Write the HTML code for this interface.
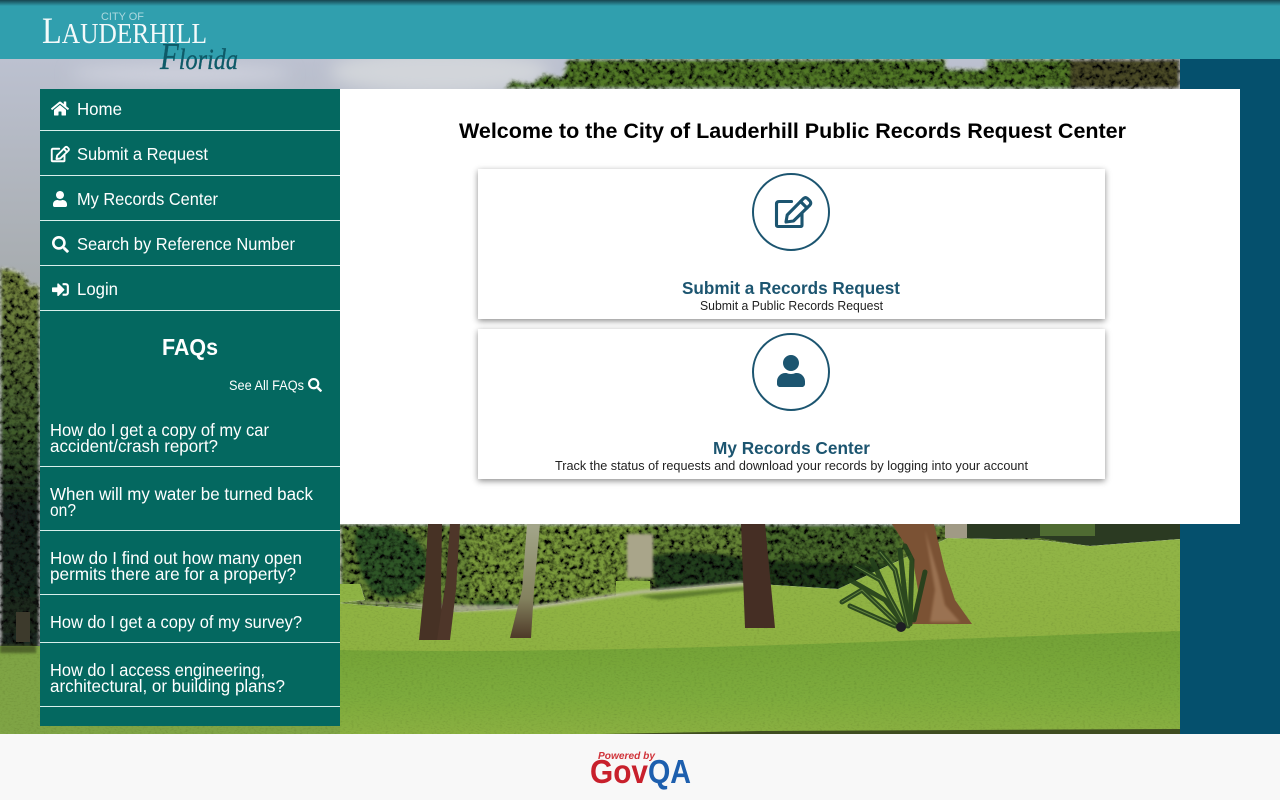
<!DOCTYPE html>
<html lang="en"><head><meta charset="utf-8"><title>City of Lauderhill Public Records Request Center</title>
<style>
html,body{margin:0;padding:0;width:1280px;height:800px;overflow:hidden;background:#fff;font-family:"Liberation Sans",sans-serif}
svg{position:absolute;left:0;top:0;display:block}
.b{position:absolute}
.card{left:478px;width:627px;height:150px;background:#fff;box-shadow:0 2px 6px rgba(0,0,0,.45)}
.ln{position:absolute;left:40px;width:300px;height:1px;background:#d8efec}
text{font-family:"Liberation Sans",sans-serif}
.m{fill:#fff;font-size:17.5px}
.f{fill:#fff;font-size:17.5px}
.ic{fill:#fff}
.dk{fill:#1c5570}
</style></head><body>
<svg width="1280" height="800" viewBox="0 0 1280 800">
<defs>
<linearGradient id="sky" gradientUnits="userSpaceOnUse" x1="0" y1="59" x2="0" y2="280"><stop offset="0" stop-color="#bcc1d0"/><stop offset="1" stop-color="#a7acaf"/></linearGradient>
<linearGradient id="lt" gradientUnits="userSpaceOnUse" x1="0" y1="270" x2="0" y2="640"><stop offset="0" stop-color="#7a8a40"/><stop offset=".45" stop-color="#3f5a2c"/><stop offset=".65" stop-color="#15241a"/><stop offset="1" stop-color="#1c2c20"/></linearGradient>
<linearGradient id="lawnU" gradientUnits="userSpaceOnUse" x1="0" y1="540" x2="0" y2="660"><stop offset="0" stop-color="#91b546"/><stop offset="1" stop-color="#8eb141"/></linearGradient>
<linearGradient id="lawnL" gradientUnits="userSpaceOnUse" x1="0" y1="640" x2="0" y2="734"><stop offset="0" stop-color="#74a337"/><stop offset=".6" stop-color="#7dab3c"/><stop offset="1" stop-color="#8ab041"/></linearGradient>
<filter id="bl" x="-30%" y="-60%" width="160%" height="220%"><feGaussianBlur stdDeviation="1.2"/></filter>
<filter id="bl3" x="-50%" y="-200%" width="200%" height="500%"><feGaussianBlur stdDeviation="8"/></filter>
<filter id="leaf" filterUnits="userSpaceOnUse" x="0" y="59" width="1180" height="675">
<feGaussianBlur in="SourceGraphic" stdDeviation="1.5" result="s"/>
<feTurbulence type="fractalNoise" baseFrequency=".2" numOctaves="3" seed="7" result="n"/>
<feColorMatrix in="n" type="matrix" values="2.6 0 0 0 -.7 2.6 0 0 0 -.7 2.6 0 0 0 -.7 0 0 0 0 1" result="g"/>
<feComposite in="g" in2="s" operator="in" result="c"/>
<feBlend in="s" in2="c" mode="multiply"/>
</filter>
<filter id="grass" filterUnits="userSpaceOnUse" x="0" y="530" width="1180" height="204">
<feTurbulence type="fractalNoise" baseFrequency=".35 .7" numOctaves="2" seed="3" result="n"/>
<feColorMatrix in="n" type="matrix" values=".5 0 0 0 .74 .5 0 0 0 .74 .5 0 0 0 .74 0 0 0 0 1" result="g"/>
<feComposite in="g" in2="SourceGraphic" operator="in" result="c"/>
<feBlend in="SourceGraphic" in2="c" mode="multiply"/>
</filter>
<linearGradient id="hdr" x1="0" y1="0" x2="0" y2="1"><stop offset="0" stop-color="#17454f"/><stop offset="1" stop-color="#309fae"/></linearGradient>
<linearGradient id="thin" x1="0" y1="0" x2="0" y2="1"><stop offset="0" stop-color="#a3a68a"/><stop offset=".65" stop-color="#84825f"/><stop offset="1" stop-color="#4e3a28"/></linearGradient>
</defs>
<!-- photo -->
<rect x="0" y="59" width="1180" height="675" fill="url(#sky)"/>
<ellipse cx="440" cy="72" rx="110" ry="22" fill="#d2d5da" filter="url(#bl3)"/>
<ellipse cx="180" cy="74" rx="110" ry="9" fill="#cfd2dd" filter="url(#bl3)"/>
<!-- foliage group -->
<g filter="url(#leaf)">
<path d="M568 59H946V69H986V59H1180V89H505L512 80 530 84 545 74 562 78Z" fill="#527a28"/>
<rect x="1070" y="59" width="110" height="30" fill="#4c4c28"/>
<path d="M0 268C14 268 30 275 28 285 34 286 40 282 40 290V650H0Z" fill="url(#lt)"/>
<rect x="340" y="524" width="840" height="90" fill="#668534"/>
<path d="M355 530C370 520 420 524 428 560 430 585 410 600 385 598 365 596 352 560 355 530Z" fill="#2e5626"/>
<path d="M473 590C480 580 505 580 515 592L512 610H478Z" fill="#375f24"/>
<path d="M470 524H640V600H470Z" fill="#7a9a3a"/>
<path d="M650 556C680 548 730 552 745 560V590L655 594Z" fill="#24401c"/>
<path d="M760 524H900V590H760Z" fill="#4a6c2a"/>
<path d="M760 560L900 565V592H760Z" fill="#1f3718"/>
</g>
<rect x="627" y="534" width="26" height="44" fill="#a9a58a" filter="url(#bl)"/>
<path d="M955 524H1180V540L1090 546 1040 538 950 540Z" fill="#2b3a22"/>
<rect x="1040" y="524" width="55" height="12" fill="#4f6b32"/>
<rect x="945" y="524" width="22" height="14" fill="#a09a85"/>
<!-- lawns -->
<g filter="url(#grass)">
<rect x="0" y="646" width="340" height="88" fill="#7fa444"/>
<path d="M340 584L360 584 365 600 340 603Z" fill="#8fb444"/>
<path d="M616 581H650V593L616 595Z" fill="#8fb444"/>
<path d="M340 603L454 612 533 607 640 592 742 583 838 589 900 560 948 538 1040 540 1090 546 1180 539V660H340Z" fill="url(#lawnU)"/>
<path d="M340 650C600 655 900 640 1180 631V734H340Z" fill="url(#lawnL)"/>
</g>
<rect x="0" y="645" width="36" height="8" fill="#3f4f24" opacity=".75" filter="url(#bl)"/>
<rect x="16" y="612" width="14" height="30" fill="#3d3a2c"/>
<path d="M340 601L400 603 470 605 533 605 640 590 743 581 745 586 640 594 533 609 460 612Z" fill="#c0bda8" opacity=".75" filter="url(#bl)"/>
<path d="M345 606C380 604 410 606 425 607L400 603Z" fill="#4e6a2c" opacity=".6"/>
<path d="M640 596L745 587 745 590 660 600Z" fill="#4e6a28" opacity=".75" filter="url(#bl)"/>
<path d="M600 734L760 731 1180 729V734Z" fill="#3f4d20"/>
<!-- trunks -->
<path d="M428 524H442L441 590 443 640H419L425 580Z" fill="#473225"/>
<path d="M450 524H460L456 590 450 640H437L446 580Z" fill="#4e3629"/>
<path d="M527 524H540L534 590 531 638H510L522 590Z" fill="url(#thin)"/>
<path d="M741 524H765L775 628H745Z" fill="#452e24"/>
<path d="M892 524H934L945 570 955 600 972 624H912L918 590 912 555Z" fill="#7b5234"/>
<path d="M925 530L938 575 945 605 960 622H930L935 590Z" fill="#a57d5b" opacity=".75" filter="url(#bl)"/>
<!-- palm -->
<g fill="none" stroke-linecap="round">
<g stroke="#24401c" stroke-width="5" opacity=".92">
<path d="M905 626L880 580 855 566"/><path d="M900 626L862 590 842 602"/><path d="M908 626L895 570 880 552"/><path d="M910 624L912 560 905 546"/><path d="M895 626L850 606"/><path d="M905 626L885 600 850 580"/><path d="M914 620L925 572"/><path d="M903 626L872 560"/><path d="M908 624L900 550"/>
</g>
<g stroke="#6f9048" stroke-width="1" opacity=".8">
<path d="M905 626L880 580 855 566"/><path d="M900 626L862 590 842 602"/><path d="M908 626L895 570 880 552"/><path d="M895 626L850 606"/>
</g>
</g>
<ellipse cx="901" cy="627" rx="5" ry="5" fill="#1e1e24"/>
<!-- header -->
<rect x="0" y="0" width="1280" height="59" fill="#309fae"/>
<rect x="0" y="0" width="1280" height="6" fill="url(#hdr)"/>
<!-- right band -->
<rect x="1180" y="59" width="100" height="675" fill="#05506d"/>
<!-- footer -->
<rect x="0" y="734" width="1280" height="66" fill="#f8f8f8"/>
</svg>

<div class="b" style="left:40px;top:89px;width:300px;height:637px;background:#046860"></div>
<div class="b" style="left:340px;top:89px;width:900px;height:435px;background:#fff"></div>
<div class="b card" style="top:169px"></div>
<div class="b card" style="top:329px"></div>
<div class="ln" style="top:130px"></div><div class="ln" style="top:175px"></div><div class="ln" style="top:220px"></div><div class="ln" style="top:265px"></div><div class="ln" style="top:310px"></div>
<div class="ln" style="top:466px"></div><div class="ln" style="top:530px"></div><div class="ln" style="top:594px"></div><div class="ln" style="top:642px"></div><div class="ln" style="top:706px"></div>

<svg width="1280" height="800" viewBox="0 0 1280 800">
<defs>
<path id="iHome" d="M280.37 148.26L96 300.11V464a16 16 0 0 0 16 16l112.06-.29a16 16 0 0 0 15.92-16V368a16 16 0 0 1 16-16h64a16 16 0 0 1 16 16v95.64a16 16 0 0 0 16 16.05L464 480a16 16 0 0 0 16-16V300L295.67 148.26a12.19 12.19 0 0 0-15.3 0zM571.6 251.47L488 182.56V44.05a12 12 0 0 0-12-12h-56a12 12 0 0 0-12 12v72.61L318.47 43a48 48 0 0 0-61 0L4.34 251.47a12 12 0 0 0-1.6 16.9l25.5 31A12 12 0 0 0 45.15 301l235.22-193.74a12.19 12.19 0 0 1 15.3 0L530.9 301a12 12 0 0 0 16.9-1.6l25.5-31a12 12 0 0 0-1.7-16.93z"/>
<g id="iEdit" fill="none" stroke-linejoin="round" stroke-linecap="round">
<path d="M16.500 5.500H4Q1.500 5.500 1.500 8V29Q1.500 30.500 3.500 30.500H25.500Q27 30.500 27 29V17"/>
<path d="M11 26L12.200 19 28.500 2.500Q30.500 .8 32.500 2.500L35 5Q36.500 7 35 9L18.500 25Z"/>
<path d="M25.500 5.500L32 12"/>
</g>
<path id="iUser" d="M224 256c70.7 0 128-57.3 128-128S294.7 0 224 0 96 57.3 96 128s57.3 128 128 128zm89.6 32h-16.7c-22.2 10.2-46.9 16-72.9 16s-50.6-5.8-72.9-16h-16.7C60.2 288 0 348.2 0 422.4V464c0 26.500 21.5 48 48 48h352c26.500 0 48-21.5 48-48v-41.6c0-74.2-60.2-134.4-134.4-134.4z"/>
<path id="iSearch" d="M505 442.7L405.3 343c-4.5-4.5-10.6-7-17-7H372c27.6-35.3 44-79.7 44-128C416 93.1 322.9 0 208 0S0 93.1 0 208s93.1 208 208 208c48.3 0 92.7-16.4 128-44v16.3c0 6.4 2.5 12.5 7 17l99.7 99.7c9.4 9.4 24.6 9.4 33.9 0l28.3-28.3c9.4-9.4 9.4-24.6.1-34zM208 336c-70.7 0-128-57.2-128-128 0-70.7 57.2-128 128-128 70.7 0 128 57.2 128 128 0 70.7-57.2 128-128 128z"/>
<path id="iLogin" d="M416 448h-84c-6.6 0-12-5.4-12-12v-40c0-6.6 5.4-12 12-12h84c17.7 0 32-14.3 32-32V160c0-17.7-14.3-32-32-32h-84c-6.6 0-12-5.4-12-12V76c0-6.6 5.4-12 12-12h84c53 0 96 43 96 96v192c0 53-43 96-96 96zm-47-201L201 79c-15-15-41-4.5-41 17v96H24c-13.3 0-24 10.7-24 24v96c0 13.3 10.7 24 24 24h136v96c0 21.5 26 32 41 17l168-168c9.3-9.4 9.3-24.6 0-34z"/>
</defs>

<!-- logo -->
<text x="101" y="20" font-size="11" fill="#fff" fill-opacity=".6" textLength="43" lengthAdjust="spacingAndGlyphs">CITY OF</text>
<text x="42" y="43" font-size="37" fill="#fff" fill-opacity=".95" style="font-family:'Liberation Serif',serif" textLength="165" lengthAdjust="spacingAndGlyphs">L<tspan font-size="29">AUDERHILL</tspan></text>
<text x="160" y="69" font-style="italic" fill="#0e5a68" stroke="#0e5a68" stroke-width=".35" style="font-family:'Liberation Serif',serif" font-size="30" textLength="78" lengthAdjust="spacingAndGlyphs"><tspan font-size="38">F</tspan>lorida</text>

<!-- menu -->
<use href="#iHome" class="ic" transform="translate(51,100.500) scale(.03125)"/>
<use href="#iEdit" stroke="#fff" stroke-width="3.8" transform="translate(51,146) scale(.5)"/>
<use href="#iUser" class="ic" transform="translate(53,191) scale(.03125)"/>
<use href="#iSearch" class="ic" transform="translate(52,236) scale(.033)"/>
<use href="#iLogin" class="ic" transform="translate(52,281) scale(.033)"/>
<text class="m" x="77" y="115" textLength="45" lengthAdjust="spacingAndGlyphs">Home</text>
<text class="m" x="77" y="160" textLength="131" lengthAdjust="spacingAndGlyphs">Submit a Request</text>
<text class="m" x="77" y="205" textLength="141" lengthAdjust="spacingAndGlyphs">My Records Center</text>
<text class="m" x="77" y="250" textLength="218" lengthAdjust="spacingAndGlyphs">Search by Reference Number</text>
<text class="m" x="77" y="295" textLength="41" lengthAdjust="spacingAndGlyphs">Login</text>

<!-- FAQs -->
<text x="162" y="355" font-size="23.5" font-weight="700" fill="#fff" textLength="56" lengthAdjust="spacingAndGlyphs">FAQs</text>
<text x="229" y="390" font-size="13.5" fill="#fff" textLength="75" lengthAdjust="spacingAndGlyphs">See All FAQs</text>
<use href="#iSearch" class="ic" transform="translate(308,378) scale(.0273)"/>
<text class="f" x="50" y="436" textLength="219" lengthAdjust="spacingAndGlyphs">How do I get a copy of my car</text>
<text class="f" x="50" y="452" textLength="168" lengthAdjust="spacingAndGlyphs">accident/crash report?</text>
<text class="f" x="50" y="500" textLength="263" lengthAdjust="spacingAndGlyphs">When will my water be turned back</text>
<text class="f" x="50" y="516" textLength="26" lengthAdjust="spacingAndGlyphs">on?</text>
<text class="f" x="50" y="564" textLength="252" lengthAdjust="spacingAndGlyphs">How do I find out how many open</text>
<text class="f" x="50" y="580" textLength="246" lengthAdjust="spacingAndGlyphs">permits there are for a property?</text>
<text class="f" x="50" y="628" textLength="252" lengthAdjust="spacingAndGlyphs">How do I get a copy of my survey?</text>
<text class="f" x="50" y="676" textLength="215" lengthAdjust="spacingAndGlyphs">How do I access engineering,</text>
<text class="f" x="50" y="692" textLength="235" lengthAdjust="spacingAndGlyphs">architectural, or building plans?</text>

<!-- main -->
<text x="459" y="138" font-size="21.5" font-weight="700" fill="#000" textLength="667" lengthAdjust="spacingAndGlyphs">Welcome to the City of Lauderhill Public Records Request Center</text>

<circle cx="791" cy="212" r="38" fill="#fff" stroke="#1c5570" stroke-width="2"/>
<use href="#iEdit" stroke="#1c5570" stroke-width="3.1" transform="translate(775,196)"/>
<text x="682" y="294" font-size="17.5" font-weight="700" fill="#1c5570" textLength="218" lengthAdjust="spacingAndGlyphs">Submit a Records Request</text>
<text x="700" y="310" font-size="13" fill="#222" textLength="183" lengthAdjust="spacingAndGlyphs">Submit a Public Records Request</text>

<circle cx="791" cy="372" r="38" fill="#fff" stroke="#1c5570" stroke-width="2"/>
<use href="#iUser" class="dk" transform="translate(777,355) scale(.0625)"/>
<text x="713" y="454" font-size="17.5" font-weight="700" fill="#1c5570" textLength="157" lengthAdjust="spacingAndGlyphs">My Records Center</text>
<text x="555" y="470" font-size="13" fill="#222" textLength="473" lengthAdjust="spacingAndGlyphs">Track the status of requests and download your records by logging into your account</text>

<!-- GovQA -->
<text x="598" y="759" font-size="10.5" font-weight="700" font-style="italic" fill="#d0333a" textLength="57" lengthAdjust="spacingAndGlyphs">Powered by</text>
<text x="590" y="783" font-size="33" font-weight="700" fill="#c8202c" textLength="58" lengthAdjust="spacingAndGlyphs">Gov</text>
<text x="648" y="783" font-size="33" font-weight="700" fill="#1d5fae" textLength="43" lengthAdjust="spacingAndGlyphs">QA</text>
</svg>
</body></html>
